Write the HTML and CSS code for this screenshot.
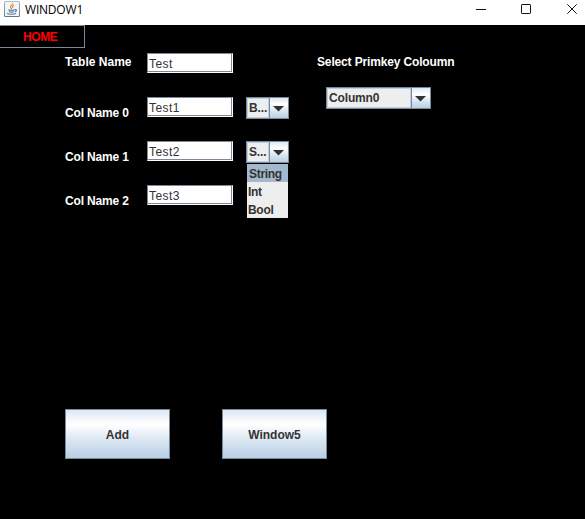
FILE: index.html
```html
<!DOCTYPE html>
<html lang="en">
<head>
<meta charset="utf-8">
<title>WINDOW1</title>
<link rel="stylesheet" href="styles.css">
</head>
<body>
<header class="titlebar">
  <svg class="app-icon" width="16" height="16" viewBox="0 0 16 16">
    <defs><linearGradient id="tile" x1="0" y1="0" x2="0" y2="1"><stop offset="0" stop-color="#aebcc8"/><stop offset="1" stop-color="#557790"/></linearGradient></defs>
    <rect width="16" height="16" rx="1.5" fill="url(#tile)"/>
    <rect x="1" y="1" width="14" height="14" rx=".5" fill="#f3f6f8"/>
    <path d="M8.8 2C9.3 4 5.6 4.6 6.5 6.4L7.7 8.2M10.2 4.3C7.7 5.4 8.2 6 8.9 7.3" fill="none" stroke="#e98432" stroke-width="1.1"/>
    <path d="M4.4 8.7C5.5 9.5 9 9.4 10.6 8.7M5 10.5C6.5 11.2 8.6 11.1 9.8 10.5M10.7 8.8C13.3 8 12.7 10.5 10.9 10.7M3.5 12C2 13.4 9.7 13.7 12 12.2" fill="none" stroke="#4b789c" stroke-width="1.1"/>
  </svg>
  <span class="title">WINDOW1</span>
  <svg class="controls" width="110" height="25" viewBox="0 0 110 25" fill="none" stroke="#111">
    <path d="M1 9.5H11"/>
    <rect x="46.5" y="4.5" width="9" height="9" rx=".6"/>
    <path d="M92.3 4.3L101.7 13.7M101.7 4.3L92.3 13.7"/>
  </svg>
</header>
<nav class="menu">HOME</nav>
<main class="content">
  <section class="fields">
    <div class="row first"><label class="label">Table Name</label><div class="input">Test</div></div>
    <div class="row"><label class="label">Col Name 0</label><div class="input">Test1</div>
      <div class="combo"><span class="value">B...</span><span class="arrow"><svg width="11" height="6" viewBox="0 0 11 6"><path d="M0 0H11L5.5 5.5Z"/></svg></span></div></div>
    <div class="row"><label class="label">Col Name 1</label><div class="input">Test2</div>
      <div class="combo"><span class="value">S...</span><span class="arrow"><svg width="11" height="6" viewBox="0 0 11 6"><path d="M0 0H11L5.5 5.5Z"/></svg></span>
        <ul class="options"><li class="selected">String</li><li>Int</li><li>Bool</li></ul>
      </div></div>
    <div class="row"><label class="label">Col Name 2</label><div class="input">Test3</div></div>
  </section>
  <section class="key">
    <div class="label">Select Primkey Coloumn</div>
    <div class="combo wide"><span class="value">Column0</span><span class="arrow"><svg width="11" height="6" viewBox="0 0 11 6"><path d="M0 0H11L5.5 5.5Z"/></svg></span></div>
  </section>
</main>
<footer class="actions"><button class="button">Add</button><button class="button">Window5</button></footer>
</body>
</html>
```
FILE: styles.css
```css
* { box-sizing: border-box; }
body {
  margin: 0;
  height: 519px;
  overflow: hidden;
  background: #000;
  color: #333;
  font: bold 12px/16px "Liberation Sans", Arial, sans-serif;
}
.titlebar {
  display: flex;
  height: 25px;
  padding-left: 4px;
  background: #fff;
}
.app-icon { margin-top: 1px; }
.title {
  margin: 1px 0 0 5px;
  color: #000;
  font: 12px/17px "Open Sans", "Noto Sans", sans-serif;
  letter-spacing: -.2px;
}
.controls { margin-left: auto; }
.menu {
  width: 85px;
  height: 23px;
  padding-left: 23px;
  border: solid #7a8a99;
  border-width: 1px 1px 1px 0;
  color: #f00;
  line-height: 22px;
  letter-spacing: -.4px;
}
.content {
  display: flex;
  height: 361px;
  padding: 5px 0 0 65px;
}
.fields { width: 252px; }
.row {
  display: flex;
  align-items: flex-start;
  height: 44px;
}
.label { color: #fff; white-space: nowrap; letter-spacing: -.15px; }
.row .label { width: 82px; padding-top: 8px; }
.row.first .label { padding-top: 1px; letter-spacing: 0; }
.input {
  width: 86px;
  height: 20px;
  padding-left: 1px;
  border: 1px solid;
  border-color: #7a8a99 #fff #fff #7a8a99;
  background: #fff;
  box-shadow: inset -1px -1px #7a8a99;
  font-weight: normal;
  line-height: 20px;
  letter-spacing: .45px;
}
.combo {
  position: relative;
  display: flex;
  width: 43px;
  height: 22px;
  margin-left: 13px;
  border: 1px solid #7a8a99;
  background: #eee;
}
.value {
  flex: 1;
  padding-left: 1px;
  border: 1px solid #b8cfe5;
  line-height: 19px;
  letter-spacing: -.15px;
}
.arrow {
  display: flex;
  align-items: center;
  justify-content: center;
  width: 19px;
  padding: 1px 1px 0 0;
  border-left: 1px solid #7a8a99;
  background: linear-gradient(#dde8f3, #fff 30%, #b8cfe5);
  fill: #333;
}
.options {
  position: absolute;
  top: 22px;
  left: 0;
  width: 41px;
  margin: 0;
  padding: 0;
  background: #eee;
  list-style: none;
  letter-spacing: -.3px;
}
.options li { height: 18px; padding-left: 1px; line-height: 20px; }
.options .selected { padding-left: 2px; background: #a3b8cc; }
.key { padding-top: 1px; }
.combo.wide { width: 105px; margin: 17px 0 0 9px; }
.actions {
  display: flex;
  gap: 52px;
  padding-left: 65px;
  height: 50px;
}
.button {
  width: 105px;
  height: 50px;
  padding: 2px 0 0;
  border: 1px solid #7a8a99;
  border-radius: 0;
  background: linear-gradient(#dde8f3, #fff 30%, #dde8f3 60%, #b8cfe5);
  color: #333;
  font: inherit;
}
```
